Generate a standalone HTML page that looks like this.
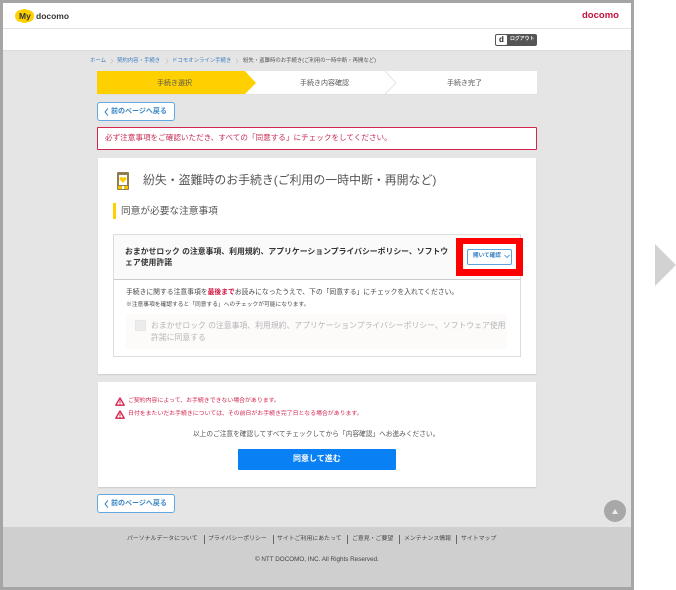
<!DOCTYPE html>
<html lang="ja">
<head>
<meta charset="utf-8">
<title>紛失・盗難時のお手続き</title>
<style>
html,body{margin:0;padding:0;background:#fff;}
body{width:676px;height:590px;position:relative;overflow:hidden;font-family:"Liberation Sans","Noto Sans CJK JP",sans-serif;color:#444;}
.a{position:absolute;white-space:nowrap;line-height:1;}
.box{position:absolute;box-sizing:border-box;}
.back{position:absolute;left:97px;width:78px;box-sizing:border-box;background:#fff;border:1px solid #62a8e2;border-radius:3px;}
.backt{position:absolute;left:111px;font-size:7px;font-weight:bold;line-height:1;color:#3a86c8;white-space:nowrap;}
.bc{position:absolute;top:59px;font-size:5.4px;line-height:1;color:#3a7fc0;white-space:nowrap;}
.ft{position:absolute;top:537px;font-size:5.9px;line-height:1;color:#444;white-space:nowrap;}
.sep{position:absolute;top:535px;width:1px;height:9px;background:#666;}
</style>
</head>
<body>
<!-- frame -->
<div class="box" style="left:0;top:0;width:634px;height:590px;background:#a5a5a5;"></div>
<div class="box" style="left:3px;top:3px;width:628px;height:25px;background:#fff;"></div>
<div class="box" style="left:3px;top:28px;width:628px;height:1px;background:#e2e2e2;"></div>
<div class="box" style="left:3px;top:29px;width:628px;height:22px;background:#fff;"></div>
<div class="box" style="left:3px;top:50px;width:628px;height:1px;background:#dcdcdc;"></div>
<div class="box" style="left:3px;top:51px;width:628px;height:476px;background:#e5e5e5;"></div>
<div class="box" style="left:3px;top:527px;width:628px;height:60px;background:#cfcfcf;"></div>

<!-- header -->
<div class="box" style="left:15px;top:10px;width:19px;height:12px;background:#ffd000;border-radius:6px;"></div>
<div class="box" style="left:18px;top:9px;width:13px;height:14px;background:#ffd000;border-radius:50%;"></div>
<div class="a" style="left:19px;top:12px;font-size:8.5px;font-weight:bold;color:#333;">My</div>
<div class="a" style="left:36px;top:12px;font-size:8.5px;font-weight:bold;color:#333;">docomo</div>
<div class="a" style="left:582px;top:11px;font-size:9.5px;font-weight:bold;color:#c8103c;">docomo</div>

<!-- logout -->
<div class="box" style="left:495px;top:34px;width:42px;height:12px;background:#555;border-radius:2px;"></div>
<div class="box" style="left:496px;top:35px;width:11px;height:10px;background:#fff;border-radius:1px;"></div>
<div class="a" style="left:499px;top:36px;font-size:8px;font-weight:bold;color:#222;">d</div>
<div class="a" style="left:510px;top:38px;font-size:4.9px;font-weight:bold;color:#eee;">ログアウト</div>

<!-- breadcrumb -->
<div class="bc" style="left:90px;">ホーム</div>
<div class="bc" style="left:117px;">契約内容・手続き</div>
<div class="bc" style="left:172px;">ドコモオンライン手続き</div>
<div class="bc" style="left:243px;color:#555;">紛失・盗難時のお手続き(ご利用の一時中断・再開など)</div>
<svg class="box" style="left:110px;top:58px;" width="4" height="6" viewBox="0 0 4 6"><polyline points="1,0.5 3,3 1,5.5" fill="none" stroke="#bbb" stroke-width="0.6"/></svg>
<svg class="box" style="left:165px;top:58px;" width="4" height="6" viewBox="0 0 4 6"><polyline points="1,0.5 3,3 1,5.5" fill="none" stroke="#bbb" stroke-width="0.6"/></svg>
<svg class="box" style="left:235px;top:58px;" width="4" height="6" viewBox="0 0 4 6"><polyline points="1,0.5 3,3 1,5.5" fill="none" stroke="#bbb" stroke-width="0.6"/></svg>

<!-- steps -->
<svg class="box" style="left:97px;top:71px;" width="440" height="24" viewBox="0 0 440 24">
<rect x="0" y="0" width="440" height="24" fill="#fff"/>
<polygon points="0,0 148,0 159,12 148,23 0,23" fill="#ffd000"/>
<polyline points="288,0 299,12 288,23" fill="none" stroke="#e4e4e4" stroke-width="1"/>
<rect x="0" y="23" width="440" height="1" fill="#e0e0e0"/>
</svg>
<div class="a" style="left:157px;top:80px;font-size:7px;color:#555;">手続き選択</div>
<div class="a" style="left:300px;top:80px;font-size:7px;color:#555;">手続き内容確認</div>
<div class="a" style="left:447px;top:80px;font-size:7px;color:#555;">手続き完了</div>

<div class="back" style="top:102px;height:19px;"></div>
<svg class="box" style="left:104px;top:108px;" width="5" height="8" viewBox="0 0 5 8"><polyline points="4,0.5 1,4 4,7.5" fill="none" stroke="#3a86c8" stroke-width="1"/></svg>
<div class="backt" style="top:108px;">前のページへ戻る</div>

<!-- error -->
<div class="box" style="left:97px;top:127px;width:440px;height:23px;background:#fff;border:1px solid #d3264f;border-radius:1px;"></div>
<div class="a" style="left:105px;top:134px;font-size:7.6px;color:#c72c55;">必ず注意事項をご確認いただき、すべての「同意する」にチェックをしてください。</div>

<!-- card 1 -->
<div class="box" style="left:98px;top:158px;width:438px;height:216px;background:#fff;box-shadow:0 1px 1px #ccc;"></div>
<svg class="box" style="left:117px;top:172px;" width="12" height="18" viewBox="0 0 12 18">
<rect x="0" y="0" width="12" height="18" rx="1" fill="#8f7d52"/>
<rect x="2" y="3" width="8" height="10" fill="#fff"/>
<rect x="1" y="14" width="10" height="3" fill="#f2c200"/>
<rect x="5" y="14" width="2" height="3" fill="#fff"/>
<path d="M6 11 L2.8 7.6 A1.7 1.7 0 0 1 6 6 A1.7 1.7 0 0 1 9.2 7.6 Z" fill="#ffcb00"/>
</svg>
<div class="a" style="left:143px;top:175px;font-size:11.9px;color:#555;">紛失・盗難時のお手続き(ご利用の一時中断・再開など)</div>

<div class="box" style="left:113px;top:203px;width:3px;height:16px;background:#ffd000;"></div>
<div class="a" style="left:121px;top:207px;font-size:9.7px;color:#555;">同意が必要な注意事項</div>

<!-- accordion -->
<div class="box" style="left:113px;top:234px;width:408px;height:46px;background:#fafafa;border:1px solid #ddd;border-bottom-color:#ccc;"></div>
<div class="a" style="left:125px;top:248px;font-size:7.85px;font-weight:bold;color:#333;">おまかせロック の注意事項、利用規約、アプリケーションプライバシーポリシー、ソフトウ</div>
<div class="a" style="left:125px;top:259px;font-size:7.85px;font-weight:bold;color:#333;">ェア使用許諾</div>

<!-- red highlight -->
<div class="box" style="left:456px;top:238px;width:67px;height:38px;background:#fff;border:7px solid #f00;border-top-width:6px;"></div>
<div class="box" style="left:467px;top:249px;width:45px;height:16px;background:#fff;border:1px solid #5aa3dd;border-radius:2px;"></div>
<div class="a" style="left:473px;top:254px;font-size:5.6px;font-weight:bold;color:#2b7cc4;">開いて確認</div>
<svg class="box" style="left:504px;top:254px;" width="6" height="5" viewBox="0 0 6 5"><polyline points="0.5,1 3,3.5 5.5,1" fill="none" stroke="#3a87cc" stroke-width="0.8"/></svg>

<div class="box" style="left:113px;top:280px;width:408px;height:77px;background:#fff;border:1px solid #ddd;border-top:0;"></div>
<div class="a" style="left:126px;top:290px;font-size:6.8px;color:#444;">手続きに関する注意事項を<b style="color:#d3103f;">最後まで</b>お読みになったうえで、下の「同意する」にチェックを入れてください。</div>
<div class="a" style="left:126px;top:303px;font-size:5.75px;color:#444;">※注意事項を確認すると「同意する」へのチェックが可能になります。</div>
<div class="box" style="left:126px;top:314px;width:381px;height:35px;background:#fdfafa;"></div>
<div class="box" style="left:135px;top:320px;width:11px;height:11px;background:#ececec;border:1px solid #e6e6e6;border-radius:1px;"></div>
<div class="a" style="left:151px;top:322px;font-size:7.85px;color:#b5b5b5;">おまかせロック の注意事項、利用規約、アプリケーションプライバシーポリシー、ソフトウェア使用</div>
<div class="a" style="left:151px;top:334px;font-size:7.85px;color:#b5b5b5;">許諾に同意する</div>

<!-- card 2 -->
<div class="box" style="left:98px;top:382px;width:438px;height:105px;background:#fff;box-shadow:0 1px 1px #ccc;"></div>
<svg class="box" style="left:115px;top:397px;" width="10" height="9" viewBox="0 0 10 9"><path d="M5 1 L9.2 8.2 H0.8 Z" fill="#fff" stroke="#d3264f" stroke-width="1.4" stroke-linejoin="round"/><rect x="4.5" y="3.5" width="1" height="2.5" fill="#d3264f"/><rect x="4.5" y="6.5" width="1" height="1" fill="#d3264f"/></svg>
<div class="a" style="left:128px;top:399px;font-size:5.9px;color:#d3264f;">ご契約内容によって、お手続きできない場合があります。</div>
<svg class="box" style="left:115px;top:410px;" width="10" height="9" viewBox="0 0 10 9"><path d="M5 1 L9.2 8.2 H0.8 Z" fill="#fff" stroke="#d3264f" stroke-width="1.4" stroke-linejoin="round"/><rect x="4.5" y="3.5" width="1" height="2.5" fill="#d3264f"/><rect x="4.5" y="6.5" width="1" height="1" fill="#d3264f"/></svg>
<div class="a" style="left:128px;top:412px;font-size:5.9px;color:#d3264f;">日付をまたいだお手続きについては、その前日がお手続き完了日となる場合があります。</div>
<div class="a" style="left:193px;top:432px;font-size:6.7px;color:#555;">以上のご注意を確認してすべてチェックしてから「内容確認」へお進みください。</div>
<div class="box" style="left:238px;top:449px;width:158px;height:21px;background:#0a80f5;border-radius:1px;"></div>
<div class="a" style="left:293px;top:455px;font-size:8px;font-weight:bold;color:#fff;">同意して進む</div>

<div class="back" style="top:494px;height:19px;"></div>
<svg class="box" style="left:104px;top:500px;" width="5" height="8" viewBox="0 0 5 8"><polyline points="4,0.5 1,4 4,7.5" fill="none" stroke="#3a86c8" stroke-width="1"/></svg>
<div class="backt" style="top:500px;">前のページへ戻る</div>

<!-- page top -->
<div class="box" style="left:604px;top:500px;width:22px;height:22px;background:#a8a8a8;border-radius:50%;"></div>
<svg class="box" style="left:611px;top:508px;" width="8" height="7" viewBox="0 0 8 7"><polygon points="4,1 7,6 1,6" fill="#eee"/></svg>

<!-- footer -->
<div class="ft" style="left:127px;">パーソナルデータについて</div>
<div class="sep" style="left:204px;"></div>
<div class="ft" style="left:208px;">プライバシーポリシー</div>
<div class="sep" style="left:273px;"></div>
<div class="ft" style="left:277px;">サイトご利用にあたって</div>
<div class="sep" style="left:347px;"></div>
<div class="ft" style="left:352px;">ご意見・ご要望</div>
<div class="sep" style="left:399px;"></div>
<div class="ft" style="left:404px;">メンテナンス情報</div>
<div class="sep" style="left:456px;"></div>
<div class="ft" style="left:461px;">サイトマップ</div>
<div class="a" style="left:255px;top:557px;font-size:6.3px;color:#444;">© NTT DOCOMO, INC. All Rights Reserved.</div>

<!-- right arrow -->
<svg class="box" style="left:655px;top:244px;" width="21" height="42" viewBox="0 0 21 42"><polygon points="0,0 21,21 0,42" fill="#d2d2d2"/></svg>
</body>
</html>
